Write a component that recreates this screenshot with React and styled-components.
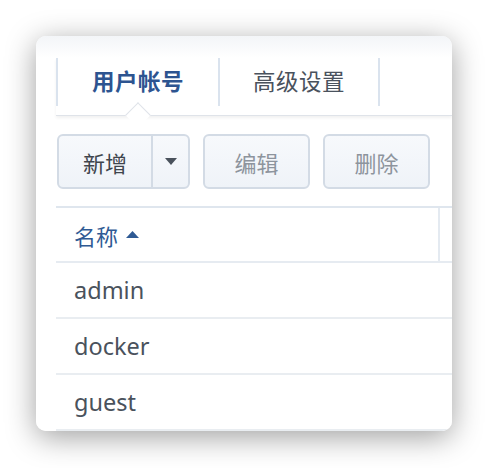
import React from "react";
import styled, { createGlobalStyle } from "styled-components";

const Global = createGlobalStyle`
  html, body { margin: 0; padding: 0; background: #ffffff; }
  body { font-family: "Noto Sans", "Noto Sans CJK SC", sans-serif; }
`;

const Stage = styled.div`
  padding: 36px 0 37px 36px;
`;

const Card = styled.div`
  width: 416px;
  height: 395px;
  border-radius: 10px;
  overflow: hidden;
  background: linear-gradient(#f3f5f8 0px, #ffffff 22px);
  box-shadow: 0 6px 30px rgba(0, 0, 0, 0.38);
  padding: 22px 0 0 20px;
  box-sizing: border-box;
  display: flex;
  flex-direction: column;
`;

const TabBar = styled.div`
  position: relative;
  display: flex;
  height: 60px;
  border-bottom: 1px solid #dfe3e9;
  box-shadow: 0 2px 3px rgba(0, 0, 0, 0.06);
`;

const Tab = styled.div`
  width: 162px;
  height: 48px;
  box-sizing: border-box;
  padding-bottom: 4px;
  border-left: 2px solid #dae3ee;
  border-right: ${(p) => (p.$last ? "2px solid #dae3ee" : "none")};
  display: flex;
  align-items: center;
  justify-content: center;
  font-size: 22.5px;
  letter-spacing: 0.5px;
  font-weight: ${(p) => (p.$active ? 700 : 400)};
  color: ${(p) => (p.$active ? "#2d5490" : "#4a525d")};
`;

const Notch = styled.div`
  position: absolute;
  left: 73px;
  bottom: -9px;
  width: 17px;
  height: 17px;
  background: #ffffff;
  border-left: 1px solid #dfe3e9;
  border-top: 1px solid #dfe3e9;
  transform: rotate(45deg);
`;

const Toolbar = styled.div`
  display: flex;
  gap: 13px;
  padding: 18px 0 17px 1px;
`;

const Btn = styled.div`
  height: 55px;
  box-sizing: border-box;
  border: 2px solid #d3dbe5;
  border-radius: 6px;
  background: linear-gradient(#f7f9fc, #eff3f8);
  display: flex;
  align-items: center;
  font-size: 22px;
  color: ${(p) => (p.$disabled ? "#8d949d" : "#3f454d")};
  width: ${(p) => p.$w}px;
  justify-content: center;
`;

const SplitMain = styled.div`
  width: 92px;
  height: 100%;
  display: flex;
  align-items: center;
  justify-content: center;
  border-right: 2px solid #d3dbe5;
`;

const SplitArrow = styled.div`
  flex: 1;
  display: flex;
  align-items: center;
  justify-content: center;
`;

const Table = styled.div`
  border-top: 2px solid #dfe6ee;
  display: flex;
  flex-direction: column;
`;

const HeadRow = styled.div`
  display: grid;
  grid-template-columns: 384px 1fr;
  height: 53px;
  border-bottom: 2px solid #e6ebf1;
`;

const HeadCell = styled.div`
  display: flex;
  align-items: center;
  gap: 8px;
  padding-left: 18px;
  font-size: 22px;
  color: #2f5a94;
  border-right: 2px solid #e4eaf1;
`;

const Row = styled.div`
  height: 56px;
  box-sizing: border-box;
  border-bottom: 2px solid #e9edf1;
  display: flex;
  align-items: center;
  padding-left: 18px;
  font-size: 23.5px;
  color: #4a525c;
`;

export default function App() {
  return (
    <>
      <Global />
      <Stage>
        <Card>
          <TabBar>
            <Tab $active>用户帐号</Tab>
            <Tab $last>高级设置</Tab>
            <Notch />
          </TabBar>
          <Toolbar>
            <Btn $w={133}>
              <SplitMain>新增</SplitMain>
              <SplitArrow>
                <svg width="12" height="7" viewBox="0 0 12 7">
                  <path d="M0 0h12L6 7z" fill="#4a525c" />
                </svg>
              </SplitArrow>
            </Btn>
            <Btn $w={107} $disabled>编辑</Btn>
            <Btn $w={107} $disabled>删除</Btn>
          </Toolbar>
          <Table>
            <HeadRow>
              <HeadCell>
                名称
                <svg width="13" height="7" viewBox="0 0 13 7">
                  <path d="M0 7h13L6.5 0z" fill="#2f5a94" />
                </svg>
              </HeadCell>
              <div />
            </HeadRow>
            <Row>admin</Row>
            <Row>docker</Row>
            <Row>guest</Row>
          </Table>
        </Card>
      </Stage>
    </>
  );
}
